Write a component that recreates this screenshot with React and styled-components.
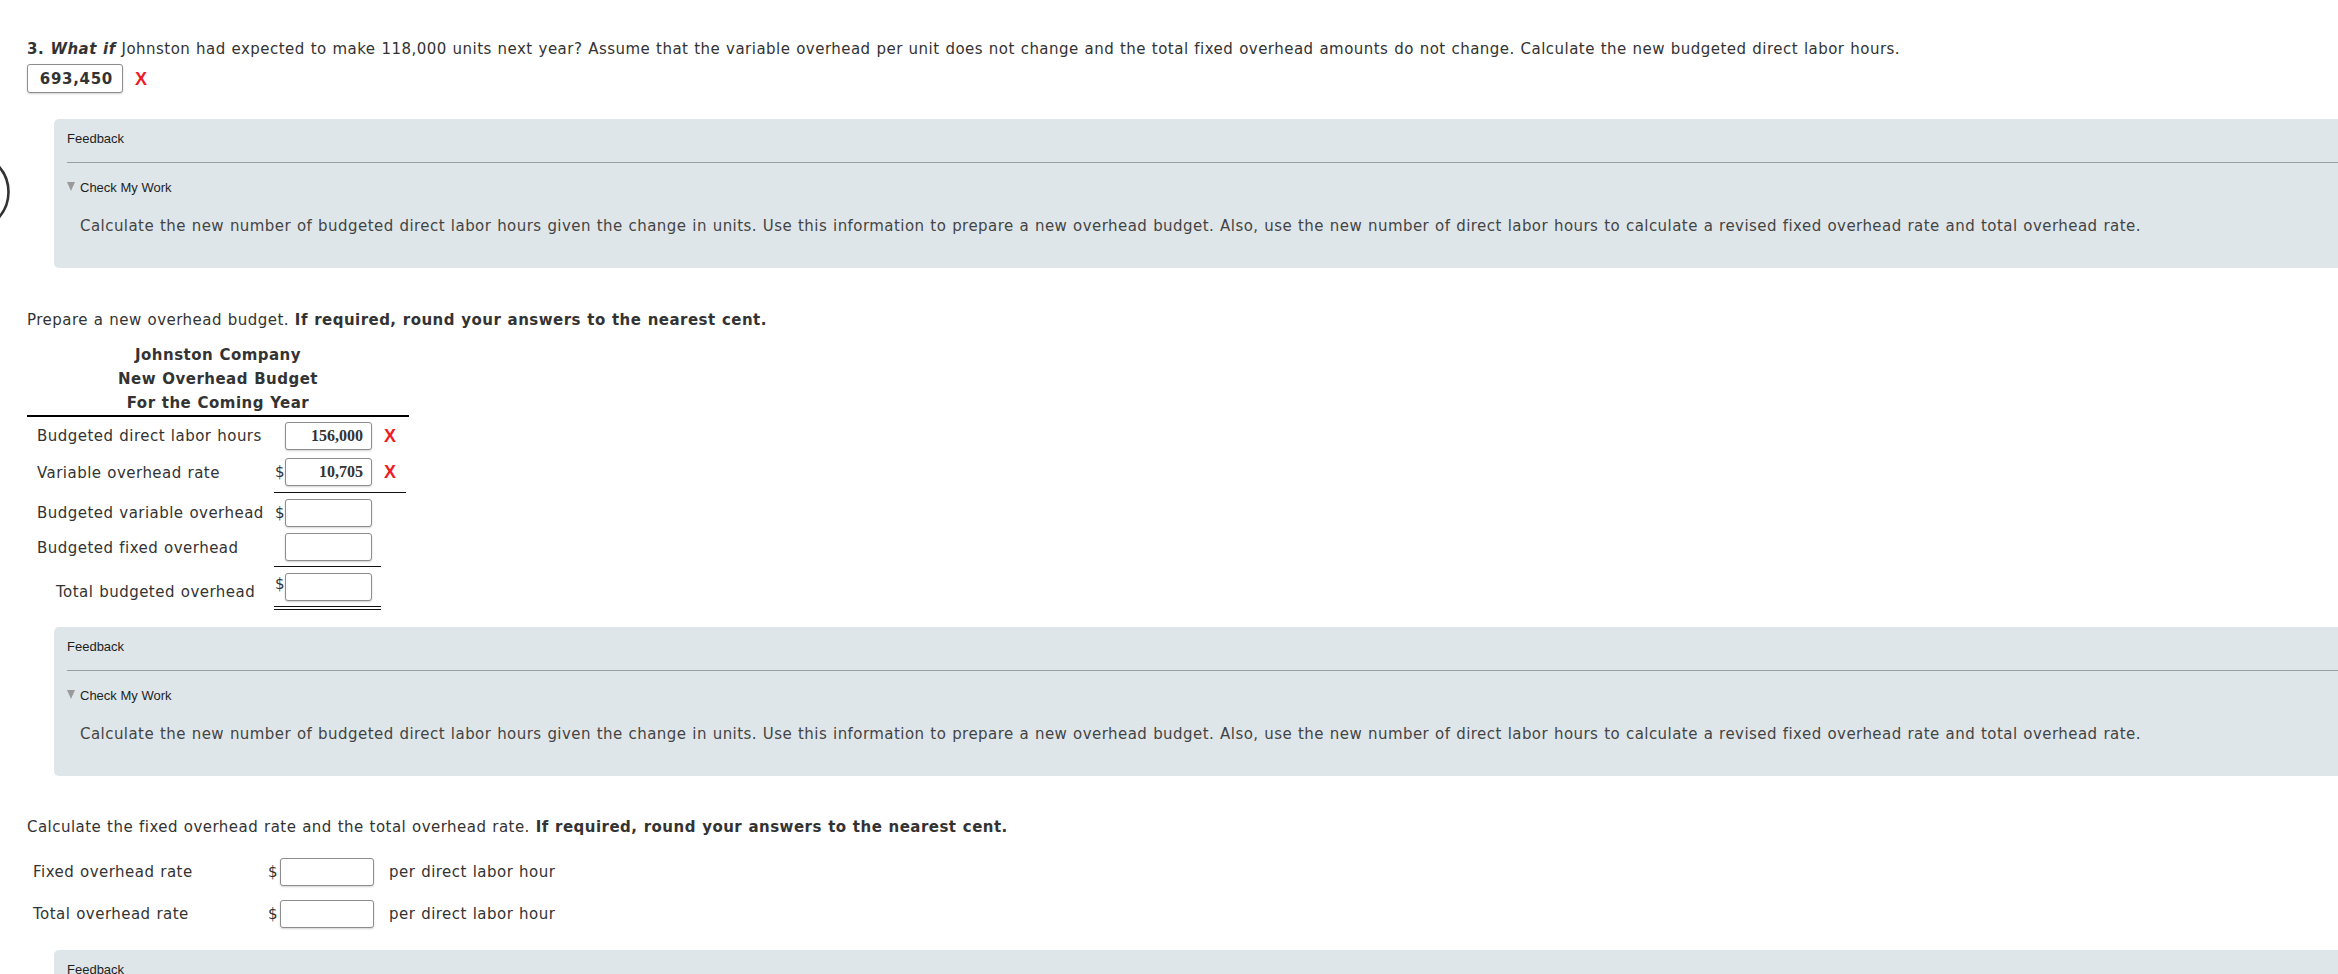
import React from "react";
import styled, { createGlobalStyle } from "styled-components";

const GlobalStyle = createGlobalStyle`
  html, body {
    margin: 0;
    padding: 0;
    background: #ffffff;
    overflow-x: hidden;
  }
  body {
    font-family: "DejaVu Sans", Verdana, sans-serif;
    color: #333333;
  }
`;

const budgetRows = [
  { label: "Budgeted direct labor hours", value: "156,000", wrong: true, pt: 5, pb: 4 },
  { label: "Variable overhead rate", dollar: true, value: "10,705", wrong: true, pt: 4, pb: 6, rule: "single", ruleMark: true },
  { label: "Budgeted variable overhead", dollar: true, pt: 6, pb: 3 },
  { label: "Budgeted fixed overhead", pt: 3, pb: 5, rule: "single" },
  { label: "Total budgeted overhead", dollar: true, indent: true, pt: 6, pb: 5, rule: "double" },
];

const rateRows = [
  { label: "Fixed overhead rate", gap: 22 },
  { label: "Total overhead rate", gap: 14 },
];

const hint =
  "Calculate the new number of budgeted direct labor hours given the change in units. Use this information to prepare a new overhead budget. Also, use the new number of direct labor hours to calculate a revised fixed overhead rate and total overhead rate.";

const FeedbackPanel = ({ gap }) => (
  <Feedback $gap={gap}>
    <FeedbackTitle>Feedback</FeedbackTitle>
    <Rule />
    <CheckRow>
      <Caret />
      Check My Work
    </CheckRow>
    <FeedbackText>{hint}</FeedbackText>
  </Feedback>
);

const App = () => {
  return (
    <Page>
      <GlobalStyle />
      <EdgeArc width="14" height="100" viewBox="0 0 14 100">
        <circle cx="-30" cy="42" r="38.5" fill="none" stroke="#333" strokeWidth="2.6" />
      </EdgeArc>

      {/* Part 3 question */}
      <Question>
        <b>3. </b>
        <b>
          <i>What if</i>
        </b>{" "}
        Johnston had expected to make 118,000 units next year? Assume that the variable overhead per
        unit does not change and the total fixed overhead amounts do not change. Calculate the new
        budgeted direct labor hours.
      </Question>
      <AnswerRow>
        <TopInput readOnly defaultValue="693,450" />
        <Mark>X</Mark>
      </AnswerRow>

      <FeedbackPanel gap={26} />

      {/* Overhead budget */}
      <Prompt $gap={43}>
        Prepare a new overhead budget. <b>If required, round your answers to the nearest cent.</b>
      </Prompt>
      <Budget>
        <BudgetHead>
          <div>Johnston Company</div>
          <div>New Overhead Budget</div>
          <div>For the Coming Year</div>
        </BudgetHead>
        {budgetRows.map((r) => (
          <BudgetRow key={r.label}>
            <LabelCell $pt={r.pt} $pb={r.pb} $indent={r.indent}>
              {r.label}
            </LabelCell>
            <AmountCell $pt={r.pt} $pb={r.pb} $rule={r.rule}>
              <Dollar $top={r.indent}>{r.dollar ? "$" : ""}</Dollar>
              <CellInput readOnly defaultValue={r.value || ""} />
            </AmountCell>
            <MarkCell $pt={r.pt} $pb={r.pb} $rule={r.ruleMark ? r.rule : undefined}>
              {r.wrong && <Mark>X</Mark>}
            </MarkCell>
          </BudgetRow>
        ))}
      </Budget>

      <FeedbackPanel gap={17} />

      {/* Rates */}
      <Prompt $gap={42}>
        Calculate the fixed overhead rate and the total overhead rate.{" "}
        <b>If required, round your answers to the nearest cent.</b>
      </Prompt>
      {rateRows.map((r) => (
        <RateRow key={r.label} $gap={r.gap}>
          <RateLabel>{r.label}</RateLabel>
          <RateDollar>$</RateDollar>
          <RateInput readOnly defaultValue="" />
          <Unit>per direct labor hour</Unit>
        </RateRow>
      ))}

      <FeedbackPanel gap={22} />
    </Page>
  );
};

const Page = styled.div`
  position: relative;
  padding: 40px 0 40px 27px;
  font-size: 15px;
  line-height: 18px;
  letter-spacing: 0.47px;
  word-spacing: 0.6px;
`;

const EdgeArc = styled.svg`
  position: absolute;
  left: 0;
  top: 150px;
  display: block;
`;

const Question = styled.p`
  margin: 0;
  font-size: 15px;
  line-height: 18px;
  color: #333;
`;

const AnswerRow = styled.div`
  display: flex;
  align-items: center;
  gap: 12px;
  margin-top: 6px;
`;

const TopInput = styled.input`
  box-sizing: border-box;
  width: 96px;
  height: 29px;
  margin: 0;
  padding: 0 9px 0 0;
  border: 1px solid #8d8d8d;
  border-radius: 3px;
  box-shadow: 0 1px 2px rgba(0, 0, 0, 0.18);
  background: #fff;
  text-align: right;
  font-family: "DejaVu Sans", Verdana, sans-serif;
  font-weight: bold;
  font-size: 15px;
  letter-spacing: 0.7px;
  color: #333;
  outline: none;
`;

const Mark = styled.span`
  font-family: "Liberation Sans", Arial, sans-serif;
  font-weight: bold;
  font-size: 18px;
  line-height: 18px;
  letter-spacing: 0;
  color: #ee1c25;
`;

const Feedback = styled.div`
  margin: ${(p) => p.$gap}px -40px 0 27px;
  padding: 12px 13px 33px;
  background: #dfe6ea;
  border-radius: 5px;
`;

const FeedbackTitle = styled.div`
  font-family: "Liberation Sans", Arial, sans-serif;
  font-size: 13px;
  line-height: 15px;
  letter-spacing: 0;
  word-spacing: 0;
  color: #1e1e1e;
`;

const Rule = styled.div`
  margin-top: 16px;
  border-top: 1px solid #9b9fa2;
`;

const CheckRow = styled.div`
  display: flex;
  align-items: center;
  margin-top: 17px;
  font-family: "Liberation Sans", Arial, sans-serif;
  font-size: 13px;
  line-height: 15px;
  letter-spacing: 0;
  word-spacing: 0;
  color: #1e1e1e;
`;

const Caret = styled.span`
  display: inline-block;
  width: 0;
  height: 0;
  margin: 0 5px 2px 0;
  border-left: 4px solid transparent;
  border-right: 4px solid transparent;
  border-top: 9px solid #9a9a9a;
`;

const FeedbackText = styled.p`
  margin: 22px 0 0;
  padding-left: 13px;
  font-size: 15px;
  line-height: 18px;
  letter-spacing: 0.45px;
  color: #444;
`;

const Prompt = styled.p`
  margin: ${(p) => p.$gap}px 0 0;
  font-size: 15px;
  line-height: 18px;
  color: #333;
`;

const Budget = styled.div`
  width: 382px;
  margin-top: 14px;
`;

const BudgetHead = styled.div`
  text-align: center;
  font-weight: bold;
  font-size: 15px;
  line-height: 24px;
  color: #333;
  border-bottom: 2px solid #000;
`;

const BudgetRow = styled.div`
  display: grid;
  grid-template-columns: 247px 107px 25px;
`;

const ruleStyle = (p) =>
  p.$rule === "double"
    ? "border-bottom: 4px double #111;"
    : p.$rule === "single"
    ? "border-bottom: 1px solid #111;"
    : "";

const LabelCell = styled.div`
  display: flex;
  align-items: center;
  padding: ${(p) => p.$pt + (p.$indent ? 6 : 0)}px 0 ${(p) => p.$pb}px
    ${(p) => (p.$indent ? 29 : 10)}px;
  white-space: nowrap;
  color: #333;
`;

const AmountCell = styled.div`
  display: flex;
  align-items: center;
  padding: ${(p) => p.$pt}px 0 ${(p) => p.$pb}px;
  ${ruleStyle}
`;

const Dollar = styled.span`
  width: 11px;
  padding-left: 1px;
  box-sizing: border-box;
  align-self: ${(p) => (p.$top ? "flex-start" : "center")};
  margin-top: ${(p) => (p.$top ? "2px" : "0")};
  letter-spacing: 0;
  color: #333;
`;

const CellInput = styled.input`
  box-sizing: border-box;
  width: 87px;
  height: 28px;
  margin: 0;
  padding: 0 8px 0 0;
  border: 1px solid #8d8d8d;
  border-radius: 3px;
  box-shadow: 0 1px 2px rgba(0, 0, 0, 0.18);
  background: #fff;
  text-align: right;
  font-family: "Liberation Serif", "Times New Roman", serif;
  font-weight: bold;
  font-size: 16px;
  color: #333;
  outline: none;
`;

const MarkCell = styled.div`
  display: flex;
  align-items: center;
  padding: ${(p) => p.$pt}px 0 ${(p) => p.$pb}px 3px;
  ${ruleStyle}
`;

const RateRow = styled.div`
  display: grid;
  grid-template-columns: 241px 12px 94px auto;
  align-items: center;
  margin-top: ${(p) => p.$gap}px;
`;

const RateLabel = styled.span`
  padding-left: 6px;
  color: #333;
`;

const RateDollar = styled.span`
  letter-spacing: 0;
  color: #333;
`;

const RateInput = styled.input`
  box-sizing: border-box;
  width: 94px;
  height: 28px;
  margin: 0;
  border: 1px solid #8d8d8d;
  border-radius: 3px;
  box-shadow: 0 1px 2px rgba(0, 0, 0, 0.18);
  background: #fff;
  outline: none;
`;

const Unit = styled.span`
  padding-left: 15px;
  color: #333;
`;

export default App;
